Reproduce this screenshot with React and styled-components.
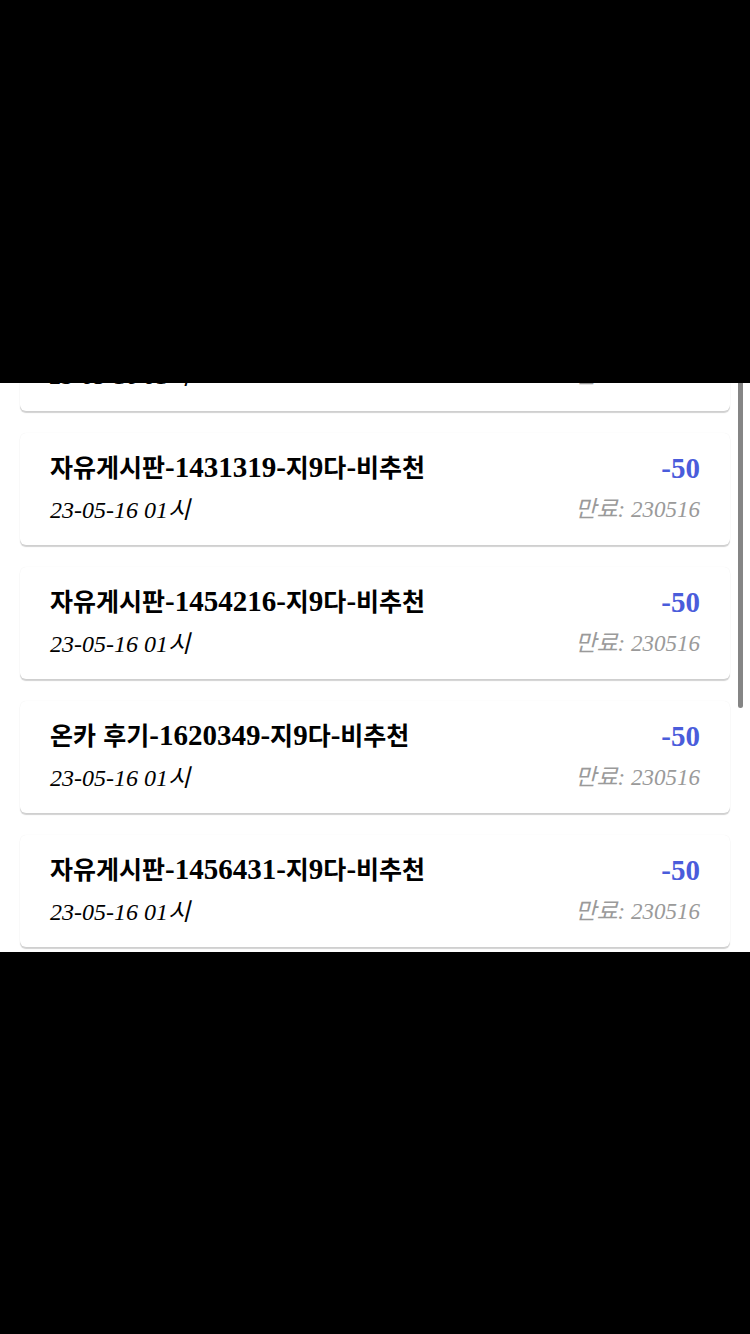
import React, { useLayoutEffect, useRef } from "react";
import styled, { createGlobalStyle } from "styled-components";

const GlobalStyle = createGlobalStyle`
    html, body {
        margin: 0;
        padding: 0;
        background: #000;
    }
    #root {
        height: 1334px;
    }
`;

const Page = styled.div`
    display: flex;
    flex-direction: column;
    height: 1334px;
    background: #000;
    padding-top: 383px;
    box-sizing: border-box;
`;

const Panel = styled.div`
    position: relative;
    height: 569px;
    background: #fff;
`;

const Scroller = styled.div`
    height: 100%;
    overflow-y: scroll;
    scrollbar-width: none;

    &::-webkit-scrollbar {
        display: none;
    }
`;

const List = styled.div`
    display: flex;
    flex-direction: column;
    gap: 22px;
    padding: 22px 20px;
`;

const Card = styled.div`
    background: #fff;
    border-radius: 6px;
    box-shadow: 0 0 1px rgba(0, 0, 0, 0.08), 0 2px 1px rgba(0, 0, 0, 0.18);
    padding: 21px 30px 21px;
`;

const Row = styled.div`
    display: flex;
    justify-content: space-between;
    align-items: center;
    height: 28px;

    & + & {
        margin-top: 14px;
    }
`;

const Title = styled.span`
    font-family: "Liberation Serif", "Noto Sans CJK KR", serif;
    font-weight: 700;
    font-size: 29px;
    line-height: 28px;
    color: #000;
    white-space: nowrap;
`;

// 한글 부분은 라틴 글자보다 작게
const Hangul = styled.span`
    font-size: 25px;
`;

const Point = styled.span`
    font-family: "Liberation Serif", serif;
    font-weight: 700;
    font-size: 29px;
    line-height: 28px;
    color: #4a5cdb;
`;

const Date = styled.span`
    font-family: "Liberation Serif", "Noto Sans CJK KR", serif;
    font-style: italic;
    font-size: 24px;
    line-height: 28px;
    color: #000;
`;

const Expire = styled.span`
    font-family: "Liberation Serif", "Noto Sans CJK KR", serif;
    font-style: italic;
    font-size: 23px;
    line-height: 28px;
    color: #9a9a9a;
`;

const Thumb = styled.div`
    position: absolute;
    top: 0;
    right: 7px;
    width: 5px;
    height: 325px;
    background: #858585;
    border-radius: 0 0 3px 3px;
`;

const items = [
    { title: "자유게시판-1429871-지9다-비추천" },
    { title: "자유게시판-1431319-지9다-비추천" },
    { title: "자유게시판-1454216-지9다-비추천" },
    { title: "온카 후기-1620349-지9다-비추천" },
    { title: "자유게시판-1456431-지9다-비추천" },
    { title: "자유게시판-1461027-지9다-비추천" },
    { title: "자유게시판-1470552-지9다-비추천" },
];

const splitHangul = (text) =>
    text.split(/([가-힣]+)/).map((part, key) =>
        /[가-힣]/.test(part) ? <Hangul key={key}>{part}</Hangul> : part
    );

export default function App() {
    const scroller = useRef(null);

    useLayoutEffect(() => {
        // 첫 카드가 조금 잘려 보이도록 스크롤
        if (scroller.current) scroller.current.scrollTop = 106;
    }, []);

    return (
        <>
            <GlobalStyle />
            <Page>
                <Panel>
                    <Scroller ref={scroller}>
                        <List>
                            {items.map((item, key) => (
                                <Card key={key}>
                                    <Row>
                                        <Title>{splitHangul(item.title)}</Title>
                                        <Point>-50</Point>
                                    </Row>
                                    <Row>
                                        <Date>23-05-16 01시</Date>
                                        <Expire>만료: 230516</Expire>
                                    </Row>
                                </Card>
                            ))}
                        </List>
                    </Scroller>
                    <Thumb />
                </Panel>
            </Page>
        </>
    );
}
